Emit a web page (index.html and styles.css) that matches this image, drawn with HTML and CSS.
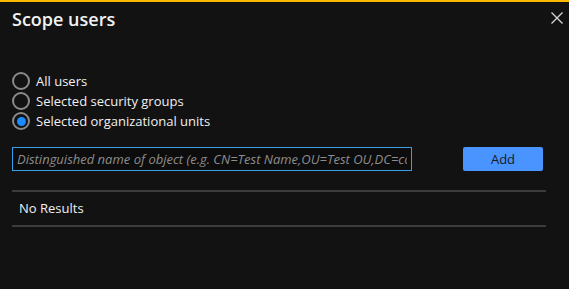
FILE: index.html
```html
<!DOCTYPE html>
<html lang="en">
<head>
  <meta charset="UTF-8">
  <meta name="viewport" content="width=device-width, initial-scale=1.0">
  <title>Scope users</title>
  <link rel="stylesheet" href="styles.css">
</head>
<body>
  <div class="panel">
    <div class="panel-header">
      <h1 class="panel-title">Scope users</h1>
      <button class="close-btn" aria-label="Close">
        <svg width="12" height="12" viewBox="0 0 12 12">
          <path d="M0.5 0.5 L11.5 11.5 M11.5 0.5 L0.5 11.5" stroke="#d6d6d6" stroke-width="1.3" fill="none"/>
        </svg>
      </button>
    </div>

    <div class="radio-group">
      <label class="radio-row">
        <input type="radio" name="scope" class="radio">
        <span>All users</span>
      </label>
      <label class="radio-row">
        <input type="radio" name="scope" class="radio">
        <span>Selected security groups</span>
      </label>
      <label class="radio-row">
        <input type="radio" name="scope" class="radio" checked>
        <span>Selected organizational units</span>
      </label>
    </div>

    <div class="search-row">
      <input type="text" class="search-input" placeholder="Distinguished name of object (e.g. CN=Test Name,OU=Test OU,DC=contoso,DC=com)">
      <button class="btn-add">Add</button>
    </div>

    <div class="results">
      <div class="results-empty">No Results</div>
    </div>
  </div>
</body>
</html>
```

FILE: styles.css
```css
body {
  margin: 0px;
  background-color: #121212;
  font-family: "Open Sans", "Noto Sans", sans-serif;
  color: #f0f0f0;
}
.panel {
  height: 289px;
  box-sizing: border-box;
  border-top: 2px solid #ffb900;
  padding: 0 23px 0 12px;
}
.panel-header {
  display: flex;
  justify-content: space-between;
  align-items: flex-start;
  height: 40px;
}
.panel-title {
  margin: 4px 0 0 0;
  font-size: 18px;
  font-weight: 600;
  line-height: 26px;
  color: #f2f2f2;
}
.close-btn {
  background: none;
  border: none;
  padding: 0;
  margin: 10px -17px 0 0;
  cursor: pointer;
  display: flex;
}
.radio-group {
  display: flex;
  flex-direction: column;
  gap: 2px;
  margin-top: 30px;
}
.radio-row {
  display: flex;
  align-items: center;
  gap: 6px;
  font-size: 13px;
  height: 18px;
  color: #f0f0f0;
}
.radio {
  appearance: none;
  margin: 0;
  width: 18px;
  height: 18px;
  border: 2px solid #8a8a8a;
  border-radius: 50%;
  box-sizing: border-box;
  display: flex;
  align-items: center;
  justify-content: center;
}
.radio:checked::after {
  content: "";
  width: 9px;
  height: 9px;
  border-radius: 50%;
  background-color: #1a8cff;
}
.search-row {
  display: flex;
  justify-content: space-between;
  align-items: center;
  margin-top: 17px;
}
.search-input {
  width: 400px;
  height: 24px;
  box-sizing: border-box;
  background-color: #0c0c0c;
  border: 1.5px solid #3a9ee8;
  color: #f0f0f0;
  font-family: "Open Sans", "Noto Sans", sans-serif;
  font-size: 13px;
  font-style: italic;
  padding: 0 4px;
  outline: none;
}
.search-input::placeholder {
  color: #8c8c8c;
}
.btn-add {
  width: 80px;
  height: 24px;
  margin-right: 3px;
  border: none;
  border-radius: 2px;
  background-color: #4a94ff;
  color: #1a1a1a;
  font-family: "Open Sans", "Noto Sans", sans-serif;
  font-size: 13px;
  cursor: pointer;
}
.results {
  margin-top: 19px;
  border-top: 2px solid #3c3c3c;
  border-bottom: 2px solid #3c3c3c;
}
.results-empty {
  padding: 0 7px;
  height: 33px;
  line-height: 33px;
  font-size: 13px;
  color: #f0f0f0;
}
```
